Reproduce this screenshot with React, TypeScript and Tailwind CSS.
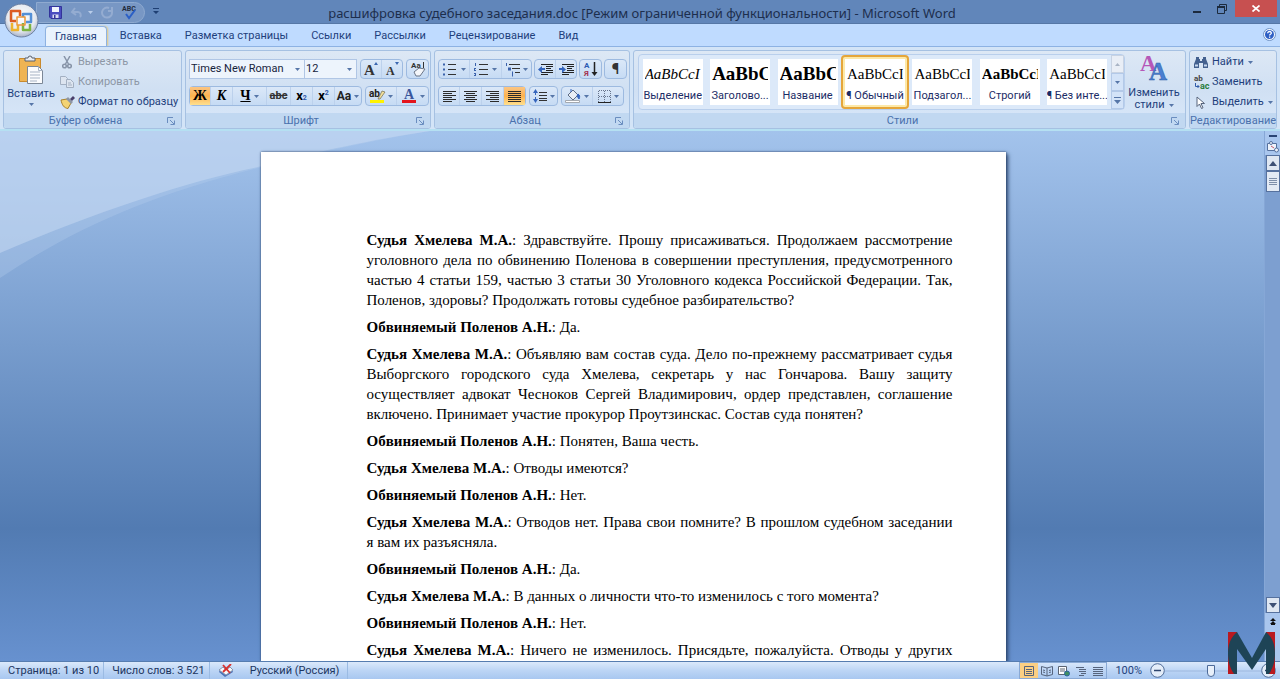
import type { ReactNode } from 'react';

const TABS = ['Главная', 'Вставка', 'Разметка страницы', 'Ссылки', 'Рассылки', 'Рецензирование', 'Вид'];

const STYLES = [
    { name: 'Выделение', sample: 'AaBbCcI', look: 'text-[15px] italic' },
    { name: 'Заголово...', sample: 'AaBbC', look: 'text-[19px] font-bold' },
    { name: 'Название', sample: 'AaBbC', look: 'text-[19px] font-bold' },
    { name: '¶ Обычный', sample: 'AaBbCcI', look: 'text-[15px]', active: true },
    { name: 'Подзагол...', sample: 'AaBbCcI', look: 'text-[15px]' },
    { name: 'Строгий', sample: 'AaBbCcI', look: 'text-[15px] font-bold' },
    { name: '¶ Без инте...', sample: 'AaBbCcI', look: 'text-[15px]' },
];

const JUDGE = 'Судья Хмелева М.А.';
const ACCUSED = 'Обвиняемый Поленов А.Н.';

const LINES = [
    { who: JUDGE, text: 'Здравствуйте. Прошу присаживаться. Продолжаем рассмотрение уголовного дела по обвинению Поленова в совершении преступления, предусмотренного частью 4 статьи 159, частью 3 статьи 30 Уголовного кодекса Российской Федерации. Так, Поленов, здоровы? Продолжать готовы судебное разбирательство?' },
    { who: ACCUSED, text: 'Да.' },
    { who: JUDGE, text: 'Объявляю вам состав суда. Дело по-прежнему рассматривает судья Выборгского городского суда Хмелева, секретарь у нас Гончарова. Вашу защиту осуществляет адвокат Чесноков Сергей Владимирович, ордер представлен, соглашение включено. Принимает участие прокурор Проутзинскас. Состав суда понятен?' },
    { who: ACCUSED, text: 'Понятен, Ваша честь.' },
    { who: JUDGE, text: 'Отводы имеются?' },
    { who: ACCUSED, text: 'Нет.' },
    { who: JUDGE, text: 'Отводов нет. Права свои помните? В прошлом судебном заседании я вам их разъясняла.' },
    { who: ACCUSED, text: 'Да.' },
    { who: JUDGE, text: 'В данных о личности что-то изменилось с того момента?' },
    { who: ACCUSED, text: 'Нет.' },
    { who: JUDGE, text: 'Ничего не изменилось. Присядьте, пожалуйста. Отводы у других' },
];

export default function App() {
    return (
        <div className="relative flex h-screen flex-col overflow-hidden bg-[#bfdbff] font-['Roboto','Noto_Sans',sans-serif] text-[11px] leading-4 text-[#1e3f7c]">
            <TitleBar />
            <TabRow />
            <Ribbon />
            <Workspace />
            <StatusBar />
            <OfficeButton />
            <Watermark />
        </div>
    );
}

function TitleBar() {
    return (
        <header className="flex h-6 shrink-0 items-start border-b border-[#5577a6] bg-[#6186ba]">
            <div className="mt-0.5 ml-9 flex h-[21px] w-[109px] items-center gap-2 rounded-r-full border border-[#8faad0] bg-[#7897c4] pl-3">
                <button aria-label="Сохранить"><SaveIcon /></button>
                <button aria-label="Отменить" className="flex items-center gap-1">
                    <svg width="14" height="12" viewBox="0 0 14 12" fill="none" stroke="#94acd1" strokeWidth="2"><path d="M2 5h6a3 3 0 0 1 2 5M5 1 2 5l4 3" /></svg>
                    <Caret className="text-[#b9cdea]" />
                </button>
                <button aria-label="Повторить">
                    <svg width="13" height="13" viewBox="0 0 13 13" fill="none" stroke="#94acd1" strokeWidth="2"><path d="M11 6a5 5 0 1 1-3-4M7 5l4 0V1" /></svg>
                </button>
                <button aria-label="Правописание"><SpellIcon /></button>
            </div>
            <button aria-label="Настройка панели" className="mt-2 ml-2">
                <svg width="6" height="7" viewBox="0 0 6 7"><path d="M0 0h6v1H0zM0 3h6L3 6z" fill="#1f3f73" /></svg>
            </button>
            <h1 className="flex-1 pt-1 pr-[60px] text-center font-['Noto_Sans',sans-serif] text-[13px] leading-[18px] whitespace-nowrap text-[#1d2e4d]">
                расшифровка судебного заседания.doc [Режим ограниченной функциональности] - Microsoft Word
            </h1>
            <div className="mr-[3px] flex h-[17px] items-center">
                <button aria-label="Свернуть" className="flex h-full w-6 items-center justify-center pt-1.5">
                    <span className="h-0.5 w-2 bg-[#1c2a3d]" />
                </button>
                <button aria-label="Восстановить" className="flex h-full w-[26px] items-center justify-center">
                    <svg width="10" height="10" viewBox="0 0 10 10" fill="none" stroke="#1c2a3d"><path d="M2.5 2V.5h7v6H8" /><path d="M.5 3h7v6.500h-7z" /><path d="M0 3h8" strokeWidth="2" /></svg>
                </button>
                <button aria-label="Закрыть" className="flex h-full w-[42px] items-center justify-center bg-[#c75050]">
                    <svg width="8" height="7" viewBox="0 0 8 7" stroke="#fff" strokeWidth="1.700"><path d="m.5.5 7 6m0-6-7 6" /></svg>
                </button>
            </div>
        </header>
    );
}

function TabRow() {
    return (
        <nav className="flex h-[22px] shrink-0 items-end gap-[3px] bg-[#bfdbff] pr-1 pl-[45px]">
            {TABS.map((tab, i) => (
                <button
                    key={tab}
                    className={i === 0
                        ? 'h-5 rounded-t border border-b-0 border-[#8db2e3] bg-[#eaf3fd] px-[9px] whitespace-nowrap shadow-[1px_0_2px_#e8c878]'
                        : 'h-5 px-2.5 whitespace-nowrap'}
                >
                    {tab}
                </button>
            ))}
            <button aria-label="Справка" className="mb-[5px] ml-auto">
                <svg width="13" height="13" viewBox="0 0 13 13"><circle cx="6.500" cy="6.500" r="6" fill="#f4f8fe" stroke="#6f93c5" /><circle cx="6.500" cy="6.500" r="4.500" fill="#2e5fc4" /><path d="M4.700 5.300c0-2.500 3.800-2.300 3.600 0C8.200 6.300 6.600 6.300 6.600 7.500M6.600 8.500v1.300" fill="none" stroke="#fff" strokeWidth="1.300" /></svg>
            </button>
        </nav>
    );
}

function Ribbon() {
    return (
        <section className="flex h-[85px] shrink-0 gap-[3px] border-t border-b-2 border-t-[#8db2e3] border-b-[#b5e0f2] bg-[#d3e4f7] px-[3px] pt-[3px]">
            <Group title="Буфер обмена" launcher className="w-[179px]">
                <div className="flex h-full pl-1">
                    <button className="flex w-[46px] flex-col items-center pt-1">
                        <PasteIcon />
                        <span className="leading-[18px]">Вставить</span>
                        <Caret />
                    </button>
                    <div className="flex flex-col pt-px pl-1.5">
                        <ToolButton muted icon={<CutIcon />}>Вырезать</ToolButton>
                        <ToolButton muted icon={<CopyIcon />}>Копировать</ToolButton>
                        <ToolButton icon={<BrushIcon />}>Формат по образцу</ToolButton>
                    </div>
                </div>
            </Group>

            <Group title="Шрифт" launcher className="w-[246px]">
                <div className="flex flex-col gap-[7px] px-[3px] pt-2">
                    <div className="flex gap-[3px]">
                        <div className="flex">
                            <Dropdown label="Шрифт" value="Times New Roman" className="w-[116px]" />
                            <Dropdown label="Размер шрифта" value="12" className="w-[52px] border-l-0" />
                        </div>
                        <Box>
                            <Tool label="Увеличить размер" className="w-[21px]"><GrowIcon /></Tool>
                            <Tool label="Уменьшить размер" className="w-[20px]"><ShrinkIcon /></Tool>
                        </Box>
                        <Box><Tool label="Очистить формат" className="w-[21px]"><ClearIcon /></Tool></Box>
                    </div>
                    <div className="flex gap-[3px]">
                        <Box>
                            <Tool label="Полужирный" active className="w-[21px] font-['Liberation_Serif',serif] text-[14px] font-bold text-black">Ж</Tool>
                            <Tool label="Курсив" className="w-[22px] font-['Liberation_Serif',serif] text-[14px] font-bold text-black italic">К</Tool>
                            <Tool label="Подчеркнутый" caret className="w-[34px] font-['Liberation_Serif',serif] text-[14px] font-bold text-black"><span className="underline">Ч</span></Tool>
                            <Tool label="Зачеркнутый" className="w-[24px] text-[11px] font-bold text-[#333]"><span className="line-through">abc</span></Tool>
                            <Tool label="Подстрочный" className="w-[22px] text-[13px] font-bold text-black">x<sub className="text-[7px] text-[#2c56a8]">2</sub></Tool>
                            <Tool label="Надстрочный" className="w-[22px] text-[13px] font-bold text-black">x<sup className="text-[7px] text-[#2c56a8]">2</sup></Tool>
                            <Tool label="Регистр" caret className="w-[26px] text-[12px] font-bold text-[#222]">Aa</Tool>
                        </Box>
                        <Box>
                            <Tool label="Цвет выделения" caret className="w-[31px]"><HighlightIcon /></Tool>
                            <Tool label="Цвет текста" caret className="w-[31px]"><FontColorIcon /></Tool>
                        </Box>
                    </div>
                </div>
            </Group>

            <Group title="Абзац" launcher className="w-[196px]">
                <div className="flex flex-col gap-[7px] px-[3px] pt-2">
                    <div className="flex gap-0.5">
                        <Box>
                            <Tool label="Маркеры" caret className="w-[31px]"><ListIcon kind="dots" /></Tool>
                            <Tool label="Нумерация" caret className="w-[32px]"><ListIcon kind="digits" /></Tool>
                            <Tool label="Многоуровневый список" caret className="w-[29px]"><ListIcon kind="levels" /></Tool>
                        </Box>
                        <Box>
                            <Tool label="Уменьшить отступ" className="w-[21px]"><IndentIcon /></Tool>
                            <Tool label="Увеличить отступ" className="w-[20px]"><IndentIcon right /></Tool>
                        </Box>
                        <Box><Tool label="Сортировка" className="w-[21px]"><SortIcon /></Tool></Box>
                        <Box><Tool label="Отобразить все знаки" className="w-[21px] text-[15px] font-bold text-[#333]">¶</Tool></Box>
                    </div>
                    <div className="flex gap-[3px]">
                        <Box>
                            <Tool label="По левому краю" className="w-[21px]"><AlignIcon d="M0 1.500h13M0 3.500h9M0 5.500h13M0 7.500h9M0 9.500h13M0 11.500h9" /></Tool>
                            <Tool label="По центру" className="w-[22px]"><AlignIcon d="M0 1.500h13M2 3.500h9M0 5.500h13M2 7.500h9M0 9.500h13M2 11.500h9" /></Tool>
                            <Tool label="По правому краю" className="w-[22px]"><AlignIcon d="M0 1.500h13M4 3.500h9M0 5.500h13M4 7.500h9M0 9.500h13M4 11.500h9" /></Tool>
                            <Tool label="По ширине" active className="w-[21px]"><AlignIcon d="M0 1.500h13M0 3.500h13M0 5.500h13M0 7.500h13M0 9.500h13M0 11.500h13" /></Tool>
                        </Box>
                        <Box><Tool label="Междустрочный интервал" caret className="w-[27px]"><SpacingIcon /></Tool></Box>
                        <Box>
                            <Tool label="Заливка" caret className="w-[31px]"><FillIcon /></Tool>
                            <Tool label="Границы" caret className="w-[30px]"><BordersIcon /></Tool>
                        </Box>
                    </div>
                </div>
            </Group>

            <Group title="Стили" launcher className="min-w-0 flex-1">
                <div className="flex h-full gap-0.5 px-1">
                    <div className="my-[3px] flex flex-1 rounded-sm border border-[#b9cfec] bg-[#dce9f9]">
                        <div className="grid flex-1 grid-cols-7">
                            {STYLES.map((s) => <StyleCard key={s.name} {...s} />)}
                        </div>
                        <div className="flex w-[13px] flex-col">
                            <button aria-label="Вверх" className="flex flex-1 items-center justify-center border border-[#c8d3e3] bg-[#e9eef6]"><Caret className="rotate-180 text-[#a9b4c5]" /></button>
                            <button aria-label="Вниз" className="flex flex-1 items-center justify-center border border-[#b3c9e8] bg-[#d3e3f8]"><Caret /></button>
                            <button aria-label="Еще" className="flex flex-1 items-center justify-center border border-[#b3c9e8] bg-[#d3e3f8]">
                                <svg width="7" height="7" viewBox="0 0 7 7"><path d="M0 0h7v1H0zM0 3h7L3.500 7z" fill="#5676a8" /></svg>
                            </button>
                        </div>
                    </div>
                    <button className="flex w-[54px] flex-col items-center pt-0.5 leading-3">
                        <ChangeStylesIcon />
                        <span className="mt-1.5">Изменить</span>
                        <span className="flex items-center gap-1">стили <Caret /></span>
                    </button>
                </div>
            </Group>

            <Group title="Редактирование" className="w-[88px]">
                <div className="flex flex-col pt-px pl-1">
                    <ToolButton icon={<FindIcon />} caret>Найти</ToolButton>
                    <ToolButton icon={<ReplaceIcon />}>Заменить</ToolButton>
                    <ToolButton icon={<CursorIcon />} caret>Выделить</ToolButton>
                </div>
            </Group>
        </section>
    );
}

function Group({ title, launcher, className, children }: { title: string; launcher?: boolean; className: string; children: ReactNode }) {
    return (
        <div className={`flex shrink-0 flex-col overflow-hidden rounded-[3px] border border-[#a6c1e2] bg-linear-to-b from-[#dde8f5] via-[#d0e0f3] to-[#d9e8fa] ${className}`}>
            <div className="min-h-0 flex-1">{children}</div>
            <div className="flex h-[15px] shrink-0 items-center bg-[#c1d8f1] text-[#4a71ad]">
                <span className="flex-1 text-center">{title}</span>
                {launcher && (
                    <button aria-label={`${title}: параметры`} className="w-3.5">
                        <svg width="8" height="8" viewBox="0 0 8 8" fill="none" stroke="#6a8dbf"><path d="M.5 6V.5H6M3 3l4 4M7.500 3.500v4h-4" /></svg>
                    </button>
                )}
            </div>
        </div>
    );
}

function ToolButton({ icon, muted, caret, children }: { icon: ReactNode; muted?: boolean; caret?: boolean; children: ReactNode }) {
    return (
        <button className={`flex h-5 items-center whitespace-nowrap ${muted ? 'text-[#8d97a6]' : ''}`}>
            <span className="flex w-[18px] items-center">{icon}</span>
            {children}
            {caret && <Caret className="ml-1 text-[#5676a8]" />}
        </button>
    );
}

function Dropdown({ label, value, className }: { label: string; value: string; className: string }) {
    return (
        <div className={`relative h-5 border border-[#b0c6e5] bg-[#edf4fc] ${className}`}>
            <select aria-label={label} className="block h-full w-full appearance-none pl-px text-[11px] leading-4 text-[#15233c] outline-none">
                <option>{value}</option>
            </select>
            <Caret className="pointer-events-none absolute top-2 right-1 text-[#5676a8]" />
        </div>
    );
}

function Box({ children }: { children: ReactNode }) {
    return <div className="flex h-5 divide-x divide-[#bcd1ec] rounded-sm border border-[#9dbae0] bg-linear-to-b from-[#dbe8f8] to-[#c6dbf4]">{children}</div>;
}

function Tool({ label, active, caret, className, children }: { label: string; active?: boolean; caret?: boolean; className: string; children: ReactNode }) {
    return (
        <button
            aria-label={label}
            className={`flex items-center justify-center gap-[3px] ${active ? 'bg-linear-to-b from-[#fbc583] via-[#fdb24d] to-[#fee08f]' : ''} ${className}`}
        >
            <span className="flex items-center">{children}</span>
            {caret && <Caret className="text-[#5676a8]" />}
        </button>
    );
}

function StyleCard({ name, sample, look, active }: { name: string; sample: string; look: string; active?: boolean }) {
    return (
        <button className={`flex items-center justify-center ${active ? 'rounded-sm border-2 border-[#e5a63a] bg-[#fde9a8]' : ''}`}>
            <span className="flex h-[46px] w-[60px] flex-col overflow-hidden bg-white px-0.5 whitespace-nowrap">
                <span className={`h-[30px] overflow-hidden text-left font-['Liberation_Serif',serif] leading-[30px] text-black ${look}`}>{sample}</span>
                <span className="flex justify-center text-[11px] leading-[14px] text-[#1b2c66]">{name}</span>
            </span>
        </button>
    );
}

function Workspace() {
    return (
        <div className="flex min-h-0 flex-1">
            <main className="relative flex-1 overflow-hidden bg-linear-to-b from-[#a3c3ec] via-[#527bb2] via-75% to-[#6791cf] pt-[21px] pl-0.5">
                <svg className="absolute top-0 left-0" width="430" height="150" viewBox="0 0 430 150">
                    <path d="M0 147C73 98 150 64 258 37 320 21 370 10 430 0H0z" fill="#b9d1ef" opacity=".3" />
                    <path d="M0 122C100 79 190 50 258 36 320 20 370 9 430 0H0z" fill="#c9dcf3" opacity=".5" />
                </svg>
                <article className="relative mx-auto flex h-full w-[745px] flex-col gap-[7px] bg-white pt-[78px] pr-[53px] pl-[106px] text-justify font-['Liberation_Serif',serif] text-[15px] leading-5 text-black shadow-[2px_2px_4px_#2c466e,0_0_2px_#2c466e]">
                    {LINES.map((line, i) => (
                        <p key={i} className={i === LINES.length - 1 ? '[text-align-last:justify]' : ''}>
                            <b>{line.who}</b>: {line.text}
                        </p>
                    ))}
                </article>
            </main>
            <div className="flex w-4 flex-col items-center border-l border-[#86a7d6] bg-[#7d9fd0]">
                <div className="flex w-full flex-col items-center gap-1 bg-[#a9c6ee] pt-1 pb-0.5">
                    <span className="h-0.5 w-2 bg-[#2a4474]" />
                    <svg width="12" height="12" viewBox="0 0 12 12" fill="#eef3fb" stroke="#56719e"><path d="M.5 2.500h9v7h-9z" /><circle cx="4" cy="2" r="1.500" /><circle cx="9.500" cy="9" r="2" /><path d="m4 5 3 2" stroke="#c35a6a" /></svg>
                </div>
                <ScrollButton label="Прокрутить вверх" up />
                <button aria-label="Полоса прокрутки" className="flex h-[21px] w-3.5 shrink-0 items-center justify-center border border-[#56719e] bg-[#e3eaf4]">
                    <svg width="8" height="7" viewBox="0 0 8 7" stroke="#7e8fa9"><path d="M0 .5h8M0 2.500h8M0 4.500h8M0 6.500h8" /></svg>
                </button>
                <div className="flex-1" />
                <ScrollButton label="Прокрутить вниз" />
                <div className="flex h-12 w-full shrink-0 justify-center bg-[#a9c6ee] pt-1">
                    <button aria-label="Предыдущая страница" className="h-2">
                        <svg width="6" height="7" viewBox="0 0 6 7" fill="#111"><path d="m0 3 3-3 3 3zM0 6l3-3 3 3z" /><path d="M1 6h4v1H1z" /></svg>
                    </button>
                </div>
            </div>
        </div>
    );
}

function ScrollButton({ label, up }: { label: string; up?: boolean }) {
    return (
        <button aria-label={label} className="flex h-4 w-3.5 shrink-0 items-center justify-center border border-[#56719e] bg-[#dfe7f2]">
            <svg width="8" height="5" viewBox="0 0 8 5"><path d={up ? 'M0 5 4 0l4 5z' : 'm0 0 4 5 4-5z'} fill="#3d5075" /></svg>
        </button>
    );
}

function StatusBar() {
    return (
        <footer className="flex h-[18px] shrink-0 items-center border-t border-[#567db0] bg-linear-to-b from-[#dbe9fb] via-[#bcd5f5] to-[#a8c7f0] text-[#1c3560]">
            <button className="h-full border-r border-[#9bbbe3] pr-1 pl-2">Страница: 1 из 10</button>
            <button className="h-full border-r border-[#9bbbe3] pr-1 pl-2">Число слов: 3 521</button>
            <button aria-label="Проверка правописания" className="px-2"><ProofIcon /></button>
            <button className="h-full border-r border-[#9bbbe3] px-2">Русский (Россия)</button>
            <div className="ml-auto flex h-full border border-[#89a9d5]">
                <button aria-label="Разметка страницы" className="flex w-[18px] items-center justify-center bg-[#fbcf83]"><ViewIcon d="M1.500 1.500h9v9h-9zM3 4.500h6M3 6.500h6M3 8.500h6" /></button>
                <button aria-label="Режим чтения" className="flex w-[17px] items-center justify-center"><ViewIcon d="M.5 1.500 6 3l5.500-1.500v8L6 11 .5 9.500zM6 3v8M2 5l2 .5M2 7l2 .5M8 5.500l2-.5M8 7.500l2-.5" /></button>
                <button aria-label="Веб-документ" className="flex w-[17px] items-center justify-center">
                    <svg width="12" height="12" viewBox="0 0 12 12" fill="#fff" stroke="#5b6472"><path d="M.5 1.500h8v8h-8zM2 4h5M2 6h5" /><circle cx="9" cy="8.500" r="2.500" fill="#3f8f62" stroke="#2a63a0" /></svg>
                </button>
                <button aria-label="Структура" className="flex w-[17px] items-center justify-center"><ViewIcon d="M1 2.500h8M4 4.500h7M4 6.500h7M6 8.500h5M4 10.500h5" /></button>
                <button aria-label="Черновик" className="flex w-[17px] items-center justify-center"><ViewIcon d="M1 2.500h10M1 4.500h10M1 6.500h10M1 8.500h10M1 10.500h10" /></button>
            </div>
            <button className="mx-2 text-[#1e3f7c]">100%</button>
            <button aria-label="Уменьшить масштаб"><ZoomKnob d="M4 7.500h7" /></button>
            <input
                type="range"
                aria-label="Масштаб"
                defaultValue={48}
                className="h-3 w-24 appearance-none bg-linear-to-b from-transparent from-45% via-[#5e80b3] via-50% to-transparent to-55% [&::-webkit-slider-thumb]:h-3 [&::-webkit-slider-thumb]:w-2 [&::-webkit-slider-thumb]:appearance-none [&::-webkit-slider-thumb]:rounded-b-full [&::-webkit-slider-thumb]:border [&::-webkit-slider-thumb]:border-[#4c6a99] [&::-webkit-slider-thumb]:bg-[#e8f0fa]"
            />
            <button aria-label="Увеличить масштаб" className="mr-1"><ZoomKnob d="M4 7.500h7M7.500 4v7" /></button>
        </footer>
    );
}

function OfficeButton() {
    return (
        <button aria-label="Кнопка Office" className="absolute top-[3px] left-1">
            <svg width="35" height="35" viewBox="0 0 35 35">
                <defs>
                    <radialGradient id="orb" cx=".5" cy=".4" r=".6">
                        <stop offset="0" stopColor="#fff" />
                        <stop offset=".7" stopColor="#e6e9f0" />
                        <stop offset="1" stopColor="#a7b2c6" />
                    </radialGradient>
                </defs>
                <circle cx="17.500" cy="17.500" r="16.500" fill="url(#orb)" stroke="#6c80a3" />
                <g fill="none" strokeWidth="2.500" strokeLinejoin="round">
                    <path d="M12 18H7V8h9v5" stroke="#dc5a22" />
                    <path d="M19 14v-3h8v8h-5" stroke="#5590d6" />
                    <path d="M14 22v5H8v-7" stroke="#edb32d" />
                    <path d="M19 20v7h7v-6" stroke="#7cb342" />
                    <path d="M13 14h8v8h-8z" stroke="#eb9738" strokeWidth="1.500" />
                </g>
            </svg>
        </button>
    );
}

function Watermark() {
    return (
        <svg className="pointer-events-none absolute right-[5px] bottom-1" width="47" height="43" viewBox="0 0 47 43">
            <path d="M0 0h9v42H0zM38 0h9v42h-9z" fill="#b9191f" />
            <path d="M9 0 24 26 38 0c6 5 9 12 9 21s-2 15-6 21h-3V17L24 38 9 17v25H6C2 36 0 30 0 21S3 5 9 0z" fill="#1e4456" />
        </svg>
    );
}

/* ---- icons ---- */

function Caret({ className = 'text-[#5676a8]' }: { className?: string }) {
    return <svg className={`shrink-0 ${className}`} width="5" height="3" viewBox="0 0 5 3"><path d="M0 0h5L2.500 3z" fill="currentColor" /></svg>;
}

function SaveIcon() {
    return <svg width="13" height="13" viewBox="0 0 13 13"><path d="M.5.500h12v12H2l-1.500-1.500z" fill="#4a4cc0" stroke="#33349a" /><path d="M3 1h7v5H3z" fill="#f1f4fd" /><path d="M3.500 8.500h6V12h-6z" fill="#d9dcf0" /><path d="M5 9h1.500v3H5z" fill="#33349a" /></svg>;
}

function SpellIcon() {
    return (
        <svg className="overflow-visible" width="17" height="15" viewBox="0 0 17 15">
            <text x="0" y="6" fontSize="7" fontWeight="700" fill="#222b3d">ABC</text>
            <path d="m4 9 3 4 6-8" fill="none" stroke="#2b5fc6" strokeWidth="2" />
        </svg>
    );
}

function PasteIcon() {
    return (
        <svg width="27" height="30" viewBox="0 0 27 30">
            <path d="M1.500 3.500h21v23h-21z" fill="#efb453" stroke="#c98a2d" />
            <path d="M7 5V3h3a2 2 0 0 1 4 0h3v3H7z" fill="#e8ebf0" stroke="#59616e" />
            <path d="M9.500 11.500h11l4 4v13h-15z" fill="#fbfcfe" stroke="#7b8796" />
            <path d="M20.500 11.500v4h4M12 17h10M12 20h10M12 23h10M12 26h7" fill="none" stroke="#a7b3c4" />
        </svg>
    );
}

function CutIcon() {
    return <svg className="ml-0.5" width="10" height="13" viewBox="0 0 10 13" fill="none" stroke="#8794a8" strokeWidth="1.500"><path d="m2 0 4.500 8M8 0 3.500 8" /><circle cx="2.500" cy="10" r="1.800" /><circle cx="7.500" cy="10" r="1.800" /></svg>;
}

function CopyIcon() {
    return <svg width="14" height="12" viewBox="0 0 14 12" fill="#dde5f0" stroke="#a3b0c2"><path d="M.5.500h5l2 2v6h-7z" /><path d="M6.500 3.500h4l3 3v5h-7zM8 7h3M8 9h4" /></svg>;
}

function BrushIcon() {
    return (
        <svg width="15" height="13" viewBox="0 0 15 13">
            <path d="m1 4 6-1 4 4-3 5.500C4 12 2 9 1 4z" fill="#f3d373" stroke="#a8812c" />
            <path d="m6 3 2-2 5 5-2 2z" fill="#8d96a5" />
            <path d="m10 3 3-3 2 2-3 3z" fill="#4a3f6b" />
        </svg>
    );
}

function GrowIcon() {
    return <svg className="overflow-visible" width="17" height="16" viewBox="0 0 17 16"><text x="1" y="14" fontSize="15" fontWeight="700" fontFamily="Liberation Serif, serif" fill="#333">A</text><path d="m11 4 2-3 2 3z" fill="#3b67b0" /></svg>;
}

function ShrinkIcon() {
    return <svg className="overflow-visible" width="15" height="16" viewBox="0 0 15 16"><text x="1" y="14" fontSize="12" fontWeight="700" fontFamily="Liberation Serif, serif" fill="#333">A</text><path d="m10 1 2 3 2-3z" fill="#3b67b0" /></svg>;
}

function ClearIcon() {
    return (
        <svg className="overflow-visible" width="16" height="16" viewBox="0 0 16 16">
            <text x="1" y="7" fontSize="8" fontWeight="700" fill="#333">Aa</text>
            <path d="M13.500 1v6" stroke="#333" />
            <path d="m4 11 5-4 6 1-5 7H6z" fill="#f4f6fa" stroke="#6b7587" />
        </svg>
    );
}

function HighlightIcon() {
    return (
        <svg className="overflow-visible" width="16" height="16" viewBox="0 0 16 16">
            <path d="M1 12h14v3H1z" fill="#fff200" />
            <text x="0" y="9" fontSize="10" fontWeight="700" fill="#222">ab</text>
            <path d="m9 11 4-8 3 1-5 7z" fill="#f2df9b" stroke="#6f6a4e" strokeWidth=".7" />
        </svg>
    );
}

function FontColorIcon() {
    return <svg className="overflow-visible" width="16" height="16" viewBox="0 0 16 16"><path d="M1 12h14v3H1z" fill="#e3141c" /><text x="3" y="11" fontSize="14" fontWeight="700" fontFamily="Liberation Serif, serif" fill="#3a569c">A</text></svg>;
}

function ListIcon({ kind }: { kind: 'dots' | 'digits' | 'levels' }) {
    const rows = {
        dots: 'M5 2.500h8M5 7.500h8M5 12.500h8',
        digits: 'M5 2.500h9M5 7.500h9M5 12.500h9',
        levels: 'M4 2.500h11M7 6.500h8M10 10.500h5',
    };
    const marks = {
        dots: 'M0 1.500h2v2H0zM0 6.500h2v2H0zM0 11.500h2v2H0z',
        digits: 'M1 1h1v3H1zM0 6h2v1H1v1h1v1H0V7.500zM0 11h2v3H0v-1h1v-1H0z',
        levels: 'M1 1h1v3H1zM3 5.500h3v3H3zM7 9.500h1v5H7z',
    };
    return <svg width="15" height="15" viewBox="0 0 15 15"><path d={rows[kind]} stroke="#333" /><path d={marks[kind]} fill="#3b62ac" /></svg>;
}

function IndentIcon({ right }: { right?: boolean }) {
    return (
        <svg width="15" height="13" viewBox="0 0 15 13">
            <path d="M3 1.500h12M8 3.500h7M8 5.500h5M8 7.500h7M3 9.500h12M3 11.500h7" stroke="#222" />
            <path d={right ? 'M0 5h3V3l4 3.500L3 10V7H0z' : 'M7 5H4V3L0 6.500 4 10V7h3z'} fill="#3565bd" />
        </svg>
    );
}

function SortIcon() {
    return (
        <svg className="overflow-visible" width="14" height="16" viewBox="0 0 14 16">
            <text x="0" y="7" fontSize="8" fontWeight="700" fill="#2f5bb3">А</text>
            <text x="0" y="15" fontSize="8" fontWeight="700" fill="#a3324e">Я</text>
            <path d="M10.500 1v11" stroke="#222" strokeWidth="1.500" /><path d="M7.500 11h6l-3 4z" fill="#222" />
        </svg>
    );
}

function AlignIcon({ d }: { d: string }) {
    return <svg width="13" height="13" viewBox="0 0 13 13" stroke="#2b2b2b"><path d={d} /></svg>;
}

function SpacingIcon() {
    return (
        <svg width="14" height="14" viewBox="0 0 14 14">
            <path d="M6 3.500h8M6 6.500h8M6 9.500h8M6 11.500h8" stroke="#333" />
            <path d="m0 4 2.500-4L5 4H3v2H2V4zM0 10l2.500 4L5 10H3V8H2v2z" fill="#3565bd" />
        </svg>
    );
}

function FillIcon() {
    return (
        <svg width="16" height="14" viewBox="0 0 16 14">
            <path d="m3 6 5-5 5 5-5 5z" fill="#e9eef6" stroke="#5f6d84" />
            <path d="M6 3V0M13 5c2 1 2 3 1 5l-2-3z" fill="#3565bd" stroke="#3565bd" />
            <path d="M.5 11.500h14v2H.5z" fill="#fff" stroke="#a4a9b0" />
        </svg>
    );
}

function BordersIcon() {
    return <svg width="13" height="13" viewBox="0 0 13 13" fill="none" stroke="#66748c"><path d="M.5 12V.5h12V12M6.500 1v11M1 6.500h11" strokeDasharray="1 1" /><path d="M0 12.500h13" stroke="#222" /></svg>;
}

function ChangeStylesIcon() {
    return (
        <svg className="overflow-visible" width="28" height="28" viewBox="0 0 28 28" fontFamily="Liberation Serif, serif" fontWeight="700">
            <text x="0" y="18" fontSize="23" fill="#b557b8">A</text>
            <text x="9" y="27" fontSize="25" fill="#4a80d2" stroke="#2f5da8" strokeWidth=".5">A</text>
        </svg>
    );
}

function FindIcon() {
    return (
        <svg width="14" height="12" viewBox="0 0 14 12" fill="#44618f">
            <path d="M2 1h3v2h1v2h2V3h1V1h3v2l2 5v4H9V7H5v5H0V8l2-5z" />
            <path d="M1 8.500h3v2H1zM10 8.500h3v2h-3z" fill="#c8d9f0" />
        </svg>
    );
}

function ReplaceIcon() {
    return (
        <svg className="overflow-visible" width="16" height="15" viewBox="0 0 16 15" fontWeight="700">
            <text x="0" y="6" fontSize="8" fill="#444">ab</text>
            <text x="6" y="14" fontSize="9" fill="#2b7d3c">ac</text>
            <path d="M1.500 8v3.500H5M3.500 10 5 11.500 3.500 13" fill="none" stroke="#2f5aa8" />
        </svg>
    );
}

function CursorIcon() {
    return <svg className="ml-0.5" width="9" height="13" viewBox="0 0 9 13"><path d="M1 1v9.500L3.500 8l2 4.500 1.500-.7-2-4.300H8.500z" fill="#fff" stroke="#56647c" /></svg>;
}

function ProofIcon() {
    return (
        <svg width="16" height="14" viewBox="0 0 16 14">
            <path d="m1 8 6 5 8-5-1-2-7 4-5-4z" fill="#4b72b8" />
            <path d="m1 6 4-3 3 3 4-3 3 3-7 5z" fill="#f5f7fb" stroke="#8796ad" />
            <path d="m5 1 7 8m1-9L5 8" stroke="#d8302c" strokeWidth="1.800" />
        </svg>
    );
}

function ViewIcon({ d }: { d: string }) {
    return <svg width="12" height="12" viewBox="0 0 12 12" fill="none" stroke="#56647c"><path d={d} /></svg>;
}

function ZoomKnob({ d }: { d: string }) {
    return <svg width="15" height="15" viewBox="0 0 15 15"><circle cx="7.500" cy="7.500" r="6.800" fill="#e4edf9" stroke="#4f6b97" /><path d={d} stroke="#2e456e" strokeWidth="1.500" /></svg>;
}
